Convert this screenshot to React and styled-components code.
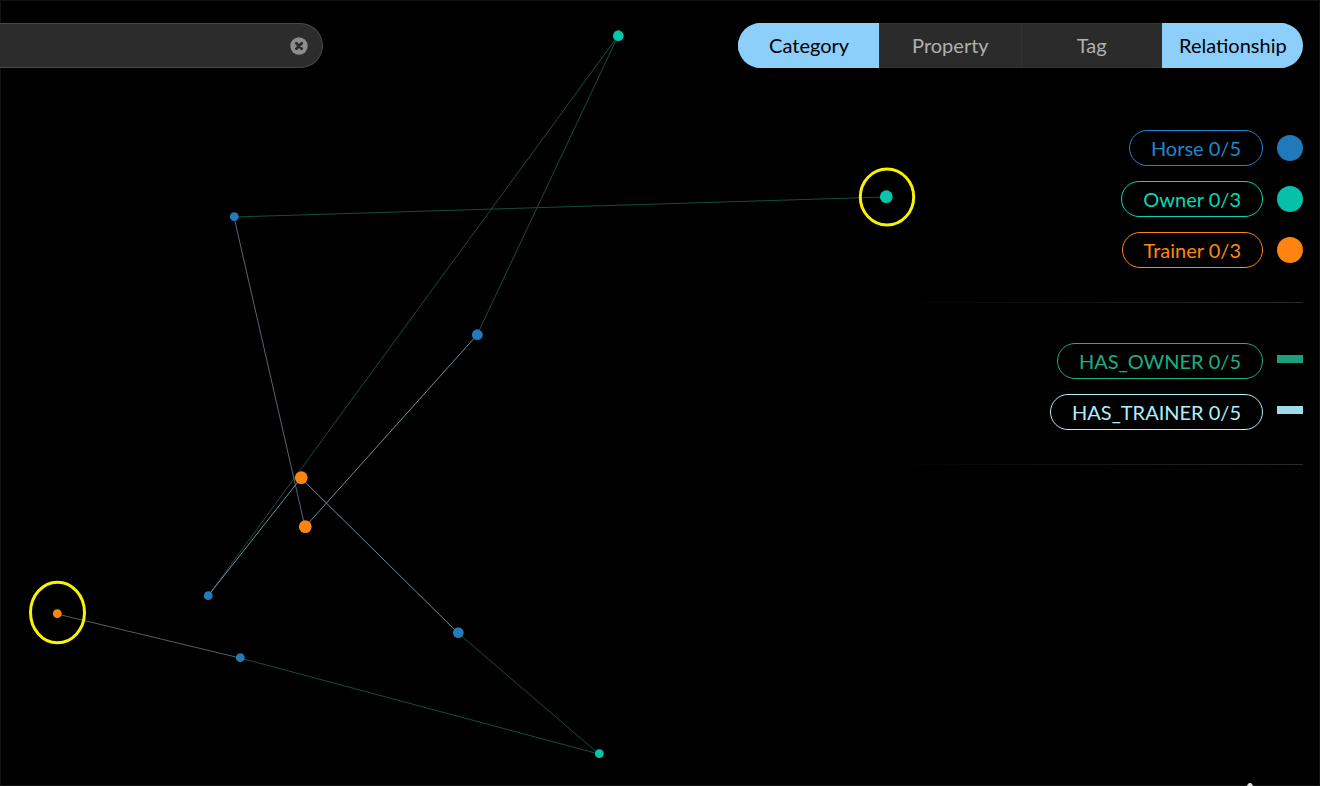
import React, { useState } from "react";
import styled, { createGlobalStyle } from "styled-components";

const GlobalStyle = createGlobalStyle`
  *, *::before, *::after { box-sizing: border-box; }
  body {
    margin: 0;
    background: #000;
    font-family: Lato, "Liberation Sans", sans-serif;
    font-size: 20px;
  }
  button, input { font: inherit; }
`;

const Page = styled.main`
  position: relative;
  min-height: 100vh;
  overflow: hidden;
  background: #000;
  box-shadow: inset 0 0 0 1px #131313;
`;

const GraphCanvas = styled.svg`
  position: absolute;
  top: 0;
  left: 0;
  overflow: visible;
`;

const Header = styled.header`
  position: relative;
  display: flex;
  justify-content: space-between;
  padding: 23px 17px 0 0;
`;

const SearchBar = styled.form`
  display: flex;
  align-items: center;
  width: 323px;
  height: 45px;
  margin: 0;
  padding-right: 14px;
  border: 1px solid #484848;
  border-left: 0;
  border-radius: 0 23px 23px 0;
  background: #2c2c2c;
`;

const SearchInput = styled.input`
  flex: 1;
  min-width: 0;
  height: 100%;
  padding: 0 16px;
  border: 0;
  outline: 0;
  background: transparent;
  color: #ddd;
`;

const ClearButton = styled.button`
  display: flex;
  padding: 0;
  border: 0;
  background: none;
  cursor: pointer;
`;

const FilterTabs = styled.nav`
  display: grid;
  grid-template-columns: repeat(4, 1fr);
  width: 565px;
  height: 45px;
  border-radius: 23px;
  overflow: hidden;
`;

const FilterTab = styled.button`
  padding: 0 0 2px;
  border: 1px solid ${(p) => (p.$active ? "#8fd0fa" : "#333")};
  border-right-width: 0;
  background: ${(p) => (p.$active ? "#8dcffb" : "#2b2b2b")};
  color: ${(p) => (p.$active ? "#000" : "#b0b0b0")};
  cursor: pointer;
`;

const Legend = styled.aside`
  position: relative;
  width: 420px;
  max-width: 100%;
  margin: 62px 17px 0 auto;
`;

const LegendGroup = styled.ul`
  display: flex;
  flex-direction: column;
  gap: 15px;
  margin: 0 0 40px;
  padding: 0 0 34px;
  list-style: none;
  border-bottom: 1px solid;
  border-image: linear-gradient(to right, #000, #2a2a2a) 1;
`;

const LegendRow = styled.li`
  display: flex;
  align-items: center;
  justify-content: flex-end;
  gap: 14px;
  color: ${(p) => p.$color};
`;

const LegendPill = styled.button`
  height: 36px;
  padding: 0 21px;
  border: 1px solid currentColor;
  border-radius: 18px;
  background: #000;
  color: inherit;
  line-height: 24px;
  cursor: pointer;
`;

const NodeKey = styled.span`
  width: 26px;
  height: 26px;
  border-radius: 50%;
  background: ${(p) => p.$fill};
`;

const EdgeKey = styled.span`
  width: 26px;
  height: 8px;
  margin-bottom: 4px;
  background: ${(p) => p.$fill};
`;

const PanelHandle = styled.svg`
  position: absolute;
  right: 65px;
  bottom: -7px;
`;

const categories = [
  { label: "Horse 0/5", color: "#1f87d0", fill: "#2079b8" },
  { label: "Owner 0/3", color: "#06d8b5", fill: "#06c1a7" },
  { label: "Trainer 0/3", color: "#ff8612", fill: "#ff8310" },
];

const relationships = [
  { label: "HAS_OWNER 0/5", color: "#1aaf85", fill: "#1c9f7a" },
  { label: "HAS_TRAINER 0/5", color: "#b0eefa", fill: "#a0dbea" },
];

const nodes = {
  owner1: { x: 618, y: 36, r: 5, kind: "owner" },
  owner2: { x: 886, y: 197, r: 6, kind: "owner" },
  owner3: { x: 599, y: 754, r: 4, kind: "owner" },
  horse1: { x: 234, y: 217, r: 4, kind: "horse" },
  horse2: { x: 477, y: 335, r: 5, kind: "horse" },
  horse3: { x: 208, y: 596, r: 4, kind: "horse" },
  horse4: { x: 458, y: 633, r: 5, kind: "horse" },
  horse5: { x: 240, y: 658, r: 4, kind: "horse" },
  trainer1: { x: 301, y: 478, r: 6, kind: "trainer" },
  trainer2: { x: 305, y: 527, r: 6, kind: "trainer" },
  trainer3: { x: 57, y: 614, r: 4, kind: "trainer" },
};

const nodeColors = {
  owner: "#06c5aa",
  horse: "#217cbc",
  trainer: "#ff8310",
};

const ownerEdges = [
  ["horse1", "owner2"],
  ["horse2", "owner1"],
  ["horse3", "owner1"],
  ["horse4", "owner3"],
  ["horse5", "owner3"],
];

const trainerEdges = [
  ["horse1", "trainer2", "#4e6a72"],
  ["horse2", "trainer2", "#6b9097"],
  ["horse3", "trainer1", "#6b9097"],
  ["horse4", "trainer1", "#6b9097"],
  ["horse5", "trainer3", "#48626a"],
];

function Edge({ from, to, color }) {
  const a = nodes[from];
  const b = nodes[to];
  return <line x1={a.x} y1={a.y} x2={b.x} y2={b.y} stroke={color} strokeWidth="1" />;
}

function Graph() {
  return (
    <GraphCanvas width="920" height="770" role="img" aria-label="Relationship graph">
      {ownerEdges.map(([from, to]) => (
        <Edge key={from} from={from} to={to} color="#12503d" />
      ))}
      {trainerEdges.map(([from, to, color]) => (
        <Edge key={from} from={from} to={to} color={color} />
      ))}
      {Object.entries(nodes).map(([id, n]) => (
        <circle key={id} cx={n.x + 0.3} cy={n.y - 0.3} r={n.r + 0.4} fill={nodeColors[n.kind]} />
      ))}
      <g fill="none" stroke="#f8f400" strokeWidth="3">
        <ellipse cx="887" cy="197" rx="26.7" ry="28" />
        <ellipse cx="57.5" cy="612.5" rx="27" ry="30.3" />
      </g>
    </GraphCanvas>
  );
}

export default function App() {
  const [query, setQuery] = useState("");
  const [active, setActive] = useState(["Category", "Relationship"]);
  const toggle = (name) =>
    setActive((list) =>
      list.includes(name) ? list.filter((n) => n !== name) : [...list, name]
    );

  return (
    <>
      <GlobalStyle />
      <Page>
        <Graph />
        <Header>
          <SearchBar onSubmit={(e) => e.preventDefault()}>
            <SearchInput
              aria-label="Search"
              value={query}
              onChange={(e) => setQuery(e.target.value)}
            />
            <ClearButton type="button" aria-label="Clear search" onClick={() => setQuery("")}>
              <svg width="18" height="18" viewBox="0 0 18 18">
                <circle cx="9" cy="9" r="8.7" fill="#8c8c8c" />
                <path d="M6.3 6.3l5.4 5.4M11.7 6.3l-5.4 5.4" stroke="#2c2c2c" strokeWidth="2.8" strokeLinecap="round" />
              </svg>
            </ClearButton>
          </SearchBar>
          <FilterTabs aria-label="Filters">
            {["Category", "Property", "Tag", "Relationship"].map((name) => (
              <FilterTab
                key={name}
                type="button"
                $active={active.includes(name)}
                aria-pressed={active.includes(name)}
                onClick={() => toggle(name)}
              >
                {name}
              </FilterTab>
            ))}
          </FilterTabs>
        </Header>
        <Legend aria-label="Legend">
          <LegendGroup>
            {categories.map((c) => (
              <LegendRow key={c.label} $color={c.color}>
                <LegendPill type="button">{c.label}</LegendPill>
                <NodeKey $fill={c.fill} />
              </LegendRow>
            ))}
          </LegendGroup>
          <LegendGroup>
            {relationships.map((r) => (
              <LegendRow key={r.label} $color={r.color}>
                <LegendPill type="button">{r.label}</LegendPill>
                <EdgeKey $fill={r.fill} />
              </LegendRow>
            ))}
          </LegendGroup>
        </Legend>
        <PanelHandle width="10" height="10" viewBox="0 0 10 10" aria-hidden="true">
          <path d="M0 5L4 0h2l4 5z" fill="#ddd" />
        </PanelHandle>
      </Page>
    </>
  );
}
